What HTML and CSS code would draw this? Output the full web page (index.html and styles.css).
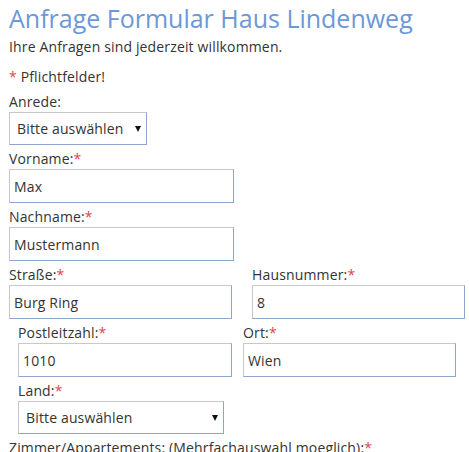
FILE: index.html
```html
<!DOCTYPE html>
<html lang="de">
<head>
<meta charset="utf-8">
<title>Anfrage Formular Haus Lindenweg</title>
<link rel="stylesheet" href="styles.css">
</head>
<body>
<div class="page">
  <h1 class="title">Anfrage Formular Haus Lindenweg</h1>
  <p class="intro">Ihre Anfragen sind jederzeit willkommen.</p>
  <p class="required-note"><span class="star">*</span> Pflichtfelder!</p>

  <div class="field">
    <label class="label" for="anrede">Anrede:</label>
    <span class="select-wrap select-anrede">
      <select id="anrede" class="select"><option>Bitte auswählen</option></select>
    </span>
  </div>

  <div class="field">
    <label class="label" for="vorname">Vorname:<span class="star">*</span></label>
    <input id="vorname" class="input input-name" type="text" value="Max">
  </div>

  <div class="field">
    <label class="label" for="nachname">Nachname:<span class="star">*</span></label>
    <input id="nachname" class="input input-name" type="text" value="Mustermann">
  </div>

  <div class="row row-street">
    <div class="field">
      <label class="label" for="strasse">Straße:<span class="star">*</span></label>
      <input id="strasse" class="input input-street" type="text" value="Burg Ring">
    </div>
    <div class="field">
      <label class="label" for="hausnr">Hausnummer:<span class="star">*</span></label>
      <input id="hausnr" class="input input-half" type="text" value="8">
    </div>
  </div>

  <div class="indent">
    <div class="row row-city">
      <div class="field">
        <label class="label" for="plz">Postleitzahl:<span class="star">*</span></label>
        <input id="plz" class="input input-plz" type="text" value="1010">
      </div>
      <div class="field">
        <label class="label" for="ort">Ort:<span class="star">*</span></label>
        <input id="ort" class="input input-half" type="text" value="Wien">
      </div>
    </div>

    <div class="field">
      <label class="label" for="land">Land:<span class="star">*</span></label>
      <span class="select-wrap select-land">
        <select id="land" class="select"><option>Bitte auswählen</option></select>
      </span>
    </div>
  </div>

  <div class="field">
    <span class="label">Zimmer/Appartements: (Mehrfachauswahl moeglich):<span class="star">*</span></span>
  </div>
</div>
</body>
</html>
```

FILE: styles.css
```css
html, body {
  margin: 0;
  padding: 0;
  background: #ffffff;
}

body {
  font-family: "Open Sans", "Liberation Sans", sans-serif;
  font-size: 14px;
  letter-spacing: 0.15px;
  color: #333333;
}

.page {
  padding: 0 0 0 9px;
}

.title {
  margin: 2px 0 0;
  font-size: 25px;
  line-height: 32px;
  font-weight: 400;
  letter-spacing: 0;
  color: #6b98d8;
  white-space: nowrap;
}

.intro {
  margin: 3px 0 0;
  line-height: 20px;
}

.required-note {
  margin: 10px 0 0;
  line-height: 20px;
}

.star {
  color: #e2444b;
}

.field {
  display: flex;
  flex-direction: column;
  align-items: flex-start;
}

.label {
  display: block;
  margin-top: 4px;
  line-height: 20px;
  white-space: nowrap;
}

.required-note + .field .label {
  margin-top: 5px;
}

.input,
.select {
  box-sizing: border-box;
  margin: 0;
  font-family: "Open Sans", "Liberation Sans", sans-serif;
  font-size: 14px;
  letter-spacing: 0.15px;
  color: #333333;
  background: #ffffff;
  border: 1px solid;
  border-color: #c8c8c8 #8ea6cc #8ea6cc #c8c8c8;
  border-radius: 0;
  outline: none;
}

.input {
  height: 34px;
  padding: 0 0 0 4px;
}

.input-name { width: 225px; }
.input-street { width: 223px; }
.input-plz { width: 214px; }
.input-half { width: 213px; }

.row {
  display: flex;
}

.row-street {
  gap: 20px;
}

.row-city {
  gap: 11px;
}

.indent {
  padding-left: 9px;
}

.select-wrap {
  position: relative;
  display: inline-block;
}

.select-wrap::after {
  content: "";
  position: absolute;
  top: 50%;
  right: 6px;
  margin-top: -3px;
  border-left: 3.5px solid transparent;
  border-right: 3.5px solid transparent;
  border-top: 6px solid #111111;
  pointer-events: none;
}

.select {
  -webkit-appearance: none;
  appearance: none;
  height: 33px;
  padding: 0 0 0 7px;
}

.select-anrede .select { width: 138px; }
.select-land .select { width: 206px; }
```
